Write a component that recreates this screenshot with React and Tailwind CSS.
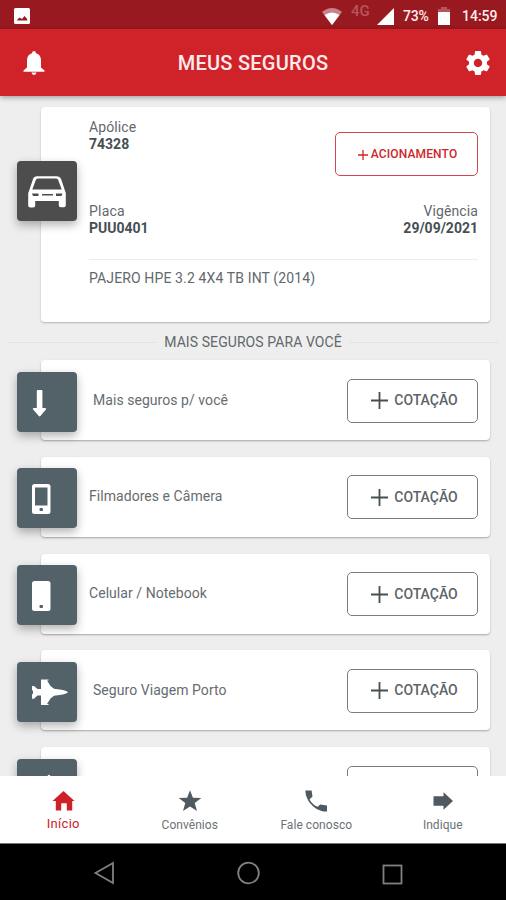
const quotes = [
  { id: "mais", label: "Mais seguros p/ você", icon: "arrow", labelClass: "ml-4" },
  { id: "camera", label: "Filmadores e Câmera", icon: "camera", labelClass: "ml-3" },
  { id: "celular", label: "Celular / Notebook", icon: "phone", labelClass: "ml-3" },
  { id: "viagem", label: "Seguro Viagem Porto", icon: "jet", labelClass: "ml-4" },
  { id: "casa", label: "", icon: "home", labelClass: "ml-3" },
];

const tabs = [
  { id: "inicio", label: "Início", active: true, path: "M12.500 2 23.500 12h-2.300v9.600h-5.400V15q0-.8-.8-.8h-4q-.8 0-.8.800v6.600H4.800V12H1.500z" },
  { id: "convenios", label: "Convênios", path: "M12 1.200l2.900 7.500 8.400.300-6.600 5 2.300 7.900-7-4.500-7 4.500 2.300-7.900-6.600-5 8.400-.300z" },
  { id: "fale", label: "Fale conosco", path: "M1.400 1.500h6.200l.9 5.900-3 3c2 3.700 4.900 6 8.200 7.400l2.500-2.300 6.800.9v6.200C12 23 1.400 12.500 1.400 1.500z" },
  { id: "indique", label: "Indique", path: "M2.500 7.300h10V3.300L22 12l-9.500 8.700v-4h-10z" },
];

function TileIcon({ name }) {
  return (
    <svg viewBox="0 0 60 60" className="size-[60px]" fill="#fff">
      {name === "car" && (
        <>
          <path
            fillRule="evenodd"
            d="M20 15.200h20q3 0 4 2.500l4 12q.8 1.300.8 3v11.500q0 2-2 2h-3q-2 0-2-2V40H18.200v4.500q0 2-2 2h-3q-2 0-2-2V33q0-1.700.8-3l4-12q1-2.800 4-2.800zM20.800 17.500q-1.500 0-2 1.500L15.300 28.500h29.400L41.200 19q-.5-1.500-2-1.500z"
          />
          <path fill="#4d4d4d" d="M15 32.500h6.500v2.500H16zM25 33h11v1.500H25zM39 32.500h6.500l-1 2.500H39z" />
        </>
      )}
      {name === "arrow" && (
        <path d="M20.800 18h3.600q1 0 1 1v17h2.600q2 .2.900 1.600l-5.500 6.400q-.8.800-1.600 0l-5.700-6.400q-1.100-1.400.8-1.600h2.900V19q0-1 1-1z" />
      )}
      {name === "camera" && (
        <>
          <rect x="15" y="16" width="18.500" height="30" rx="2.500" />
          <path fill="#536168" d="M18 19.500h12.500v18H18z" />
          <rect x="22.500" y="40" width="3.500" height="3" rx="1" fill="#536168" />
        </>
      )}
      {name === "phone" && (
        <>
          <rect x="15" y="16" width="18.500" height="30" rx="2.500" />
          <rect x="22.500" y="40" width="3.500" height="3" rx="1" fill="#536168" />
        </>
      )}
      {name === "jet" && (
        <path d="M24 17.500h7.500v1H30l3.500 5.500 3.500 2.800 5.500.8q7.500 1 8.500 2.700-1 1.700-8.500 2.700l-5.500.8-3.500 2.800-3.500 5.500h1.500v1H24v-9.600h-3.500l-3.500 3.200h-2v-4.200l1-1v-2.400l-1-1v-4.200h2l3.500 3.200H24z" />
      )}
      {name === "home" && <path d="M32 15.500 17 29h4v15h8V34h6v10h8V29h4z" />}
    </svg>
  );
}

function StatusBar() {
  return (
    <div className="flex h-[29px] shrink-0 items-center bg-[#98191f] pt-[3px] text-[14px] font-medium text-[#ffecec]">
      <svg viewBox="0 0 16 16" className="ml-[14px] size-4" fill="#fff">
        <path fillRule="evenodd" d="M1.500 0h13Q16 0 16 1.500v13q0 1.500-1.500 1.500h-13Q0 16 0 14.500v-13Q0 0 1.500 0zM3 12.500h10.200V11L10.500 8 8 11 5.500 9.500 3 12z" />
      </svg>
      <svg viewBox="0 0 20 17" className="ml-auto h-[17px] w-5">
        <path d="M0 4Q10-4 20 4L10 17z" fill="#c98086" />
        <path d="M2.500 7Q10 2 17.500 7L10 17z" fill="#fff" />
      </svg>
      <span className="ml-[9px] w-[21px] pb-2.5 text-[15px] leading-none text-[#b9555a]">4G</span>
      <svg viewBox="0 0 17 17" className="ml-[5px] size-[17px]">
        <path d="M17 0v17H0z" fill="#fff" />
      </svg>
      <span className="ml-[9px] w-[28px] tracking-[-0.2px]">73%</span>
      <svg viewBox="0 0 12 18" className="ml-[7px] h-[18px] w-3">
        <path d="M3 0h6v2h3v4H0V2h3z" fill="#b9555a" />
        <path d="M0 5h12v13H0z" fill="#fff" />
      </svg>
      <span className="mr-[9px] ml-[12px] w-[35px] whitespace-nowrap">14:59</span>
    </div>
  );
}

function Header() {
  return (
    <header className="z-10 flex h-[67px] shrink-0 items-center justify-between bg-[#d02329] pr-[16px] pl-[23px] shadow-[0_2px_5px_rgba(0,0,0,0.3)]">
      <svg viewBox="0 0 22 24" className="h-6 w-[22px]" fill="#fff">
        <path d="M11 0q1.800 0 2 2.200 5 1.500 5 7.300v7l3.500 3V20.700H.5V19.500l3.500-3v-7q0-5.800 5-7.300Q9.200 0 11 0zM8.500 21.600h5q-.5 2.400-2.500 2.400t-2.500-2.400z" />
      </svg>
      <h1 className="mr-[5px] text-[20px] font-medium tracking-[0.250px] text-[#ffebeb]">MEUS SEGUROS</h1>
      <svg viewBox="2 2 20 20" className="size-6" fill="#fff">
        <path d="M19.430 12.980c.04-.32.07-.64.07-.98s-.03-.66-.07-.98l2.110-1.650c.19-.15.240-.42.120-.64l-2-3.460c-.12-.22-.39-.3-.61-.22l-2.490 1c-.52-.4-1.080-.73-1.690-.98l-.38-2.650C14.460 2.180 14.250 2 14 2h-4c-.25 0-.46.180-.49.420l-.38 2.650c-.61.250-1.170.59-1.690.98l-2.490-1c-.23-.09-.49 0-.61.220l-2 3.460c-.13.220-.07.49.120.64l2.110 1.650c-.04.320-.07.650-.07.980s.03.660.07.980l-2.110 1.650c-.19.150-.24.420-.12.640l2 3.460c.12.220.39.300.61.220l2.490-1c.52.400 1.080.730 1.690.980l.38 2.650c.03.240.240.420.490.420h4c.25 0 .46-.18.490-.42l.38-2.650c.61-.25 1.170-.59 1.690-.98l2.490 1c.23.090.490 0 .61-.22l2-3.460c.12-.22.070-.49-.12-.64zM12 15.500c-1.930 0-3.500-1.570-3.500-3.500s1.570-3.500 3.500-3.500 3.500 1.570 3.500 3.500-1.570 3.500-3.500 3.500z" />
      </svg>
    </header>
  );
}

function PolicyCard() {
  return (
    <section className="mr-4 ml-[41px] flex h-[215px] rounded-[4px] bg-white shadow-[0_1px_2px_rgba(0,0,0,0.25)]">
      <div className="mt-[53.500px] -ml-6 size-[60px] shrink-0 rounded-[4px] bg-[#4d4d4d] shadow-[0_4px_10px_rgba(0,0,0,0.3)]">
        <TileIcon name="car" />
      </div>
      <div className="ml-3 flex-1 pr-3 text-[14px] leading-[17px] text-[#62686c]">
        <div className="flex h-[83px] justify-between pt-3">
          <div>
            <p className="tracking-[0.1px]">Apólice</p>
            <p className="font-bold text-[#474f55]">74328</p>
          </div>
          <button className="mt-[13px] flex h-11 w-[143px] items-center justify-center rounded-[5px] border border-[#d4474d] pt-px pl-0.5 text-[12px] font-medium tracking-[0.150px] text-[#d0252c]">
            <svg viewBox="0 0 10 10" className="mr-[3px] size-[10px]" stroke="#d0252c" strokeWidth="1.300">
              <path d="M5 0v10M0 5h10" />
            </svg>
            ACIONAMENTO
          </button>
        </div>
        <div className="mt-[13px] flex justify-between">
          <div>
            <p className="tracking-[0.2px]">Placa</p>
            <p className="font-bold text-[#474f55]">PUU0401</p>
          </div>
          <div className="text-right">
            <p className="tracking-[0.1px]">Vigência</p>
            <p className="font-bold text-[#474f55]">29/09/2021</p>
          </div>
        </div>
        <p className="mt-[22px] border-t border-[#ededed] pt-[10px] tracking-[0.130px]">PAJERO HPE 3.2 4X4 TB INT (2014)</p>
      </div>
    </section>
  );
}

function QuoteCard({ quote }) {
  return (
    <li className="mr-4 mb-[16.750px] ml-[41px] flex h-20 shrink-0 items-center rounded-[4px] bg-white shadow-[0_1px_2px_rgba(0,0,0,0.3)]">
      <div className="mt-[3px] -ml-6 size-[60px] shrink-0 rounded-[4px] bg-[#536168] shadow-[0_4px_10px_rgba(0,0,0,0.3)]">
        <TileIcon name={quote.icon} />
      </div>
      <span className={`text-[14px] tracking-[0.050px] text-[#666c70] ${quote.labelClass}`}>{quote.label}</span>
      <button className="mt-px mr-3 ml-auto flex h-11 w-[131px] items-center justify-center rounded-[5px] border border-[#777e80] pl-1 text-[14px] font-medium text-[#5d6468]">
        {quote.label && (
          <>
            <svg viewBox="0 0 17 17" className="mr-[6px] size-[17px]" stroke="#464e52" strokeWidth="1.800">
              <path d="M8.500 0v17M0 8.500h17" />
            </svg>
            COTAÇÃO
          </>
        )}
      </button>
    </li>
  );
}

function TabBar() {
  return (
    <nav className="z-10 grid h-[67px] shrink-0 grid-cols-4 bg-white">
      {tabs.map((tab) => (
        <a key={tab.id} className={`flex flex-col items-center pt-[13px] ${tab.active ? "text-[#cf2027]" : "text-[#4e5a5f]"}`}>
          <svg viewBox="0 0 24 24" className="size-6" fill="currentColor">
            <path d={tab.path} />
          </svg>
          <span
            className={
              tab.active
                ? "mt-[3px] text-[13px] leading-4 tracking-[0.3px]"
                : "mt-1 text-[12px] leading-4 tracking-[0.050px] text-[#6b7275]"
            }
          >
            {tab.label}
          </span>
        </a>
      ))}
    </nav>
  );
}

function AndroidNav() {
  return (
    <div className="flex h-[57px] shrink-0 items-center border-t border-[#777] bg-black pt-0.5">
      <svg viewBox="0 0 24 24" className="ml-[92px] size-6" fill="none" stroke="#808080" strokeWidth="1.800">
        <path d="M21 2v20L3.500 12z" />
      </svg>
      <svg viewBox="0 0 24 24" className="ml-[120px] size-6" fill="none" stroke="#808080" strokeWidth="1.800">
        <circle cx="12.500" cy="12" r="10.300" />
      </svg>
      <svg viewBox="0 0 24 24" className="ml-[121px] size-6" fill="none" stroke="#808080" strokeWidth="1.800">
        <rect x="2.500" y="4.500" width="18" height="18" />
      </svg>
    </div>
  );
}

export default function App() {
  return (
    <div className="flex h-[900px] w-[506px] flex-col overflow-hidden bg-[#eeeeee] font-[Roboto,sans-serif]">
      <StatusBar />
      <Header />
      <main className="min-h-0 flex-1 overflow-hidden pt-[11px]">
        <PolicyCard />
        <div className="mx-2 flex h-[38px] items-center pt-[3px] text-[14px] tracking-[0.080px] text-[#62686c]">
          <span className="h-px flex-1 bg-[#e3e3e3]" />
          <h2 className="px-2">MAIS SEGUROS PARA VOCÊ</h2>
          <span className="h-px flex-1 bg-[#e3e3e3]" />
        </div>
        <ul>
          {quotes.map((quote) => (
            <QuoteCard key={quote.id} quote={quote} />
          ))}
        </ul>
      </main>
      <TabBar />
      <AndroidNav />
    </div>
  );
}
